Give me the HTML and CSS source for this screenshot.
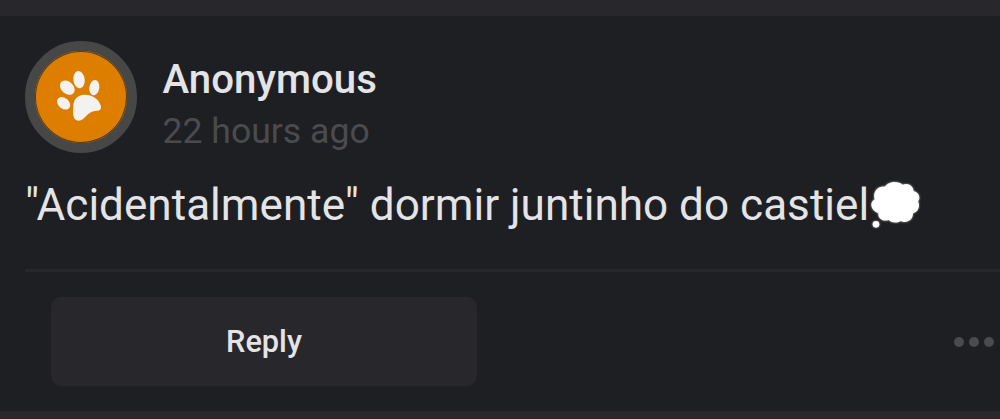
FILE: index.html
```html
<!DOCTYPE html>
<html lang="en">
<head>
  <meta charset="UTF-8">
  <meta name="viewport" content="width=device-width, initial-scale=1.0">
  <title>Question</title>
  <link rel="stylesheet" href="styles.css">
</head>
<body>
  <article class="card">
    <header class="card-header">
      <div class="avatar">
        <svg class="paw" viewBox="132 120 162 162" width="54" height="54">
          <ellipse cx="161" cy="220" rx="16" ry="22" transform="rotate(-50 161 220)"/>
          <ellipse cx="172" cy="173" rx="18" ry="25" transform="rotate(-48 172 173)"/>
          <ellipse cx="207" cy="149" rx="17" ry="26" transform="rotate(-8 207 149)"/>
          <ellipse cx="253" cy="173" rx="15" ry="23" transform="rotate(8 253 173)"/>
          <path d="M223 194C245 193 266 206 272 226C276 240 268 243 256 243C244 244 236 250 226 260C216 272 203 276 195 268C188 260 189 244 190 228C191 207 202 195 223 194Z"/>
        </svg>
      </div>
      <div class="author">
        <div class="name">Anonymous</div>
        <div class="time">22 hours ago</div>
      </div>
    </header>
    <div class="question">
      <span class="question-text">"Acidentalmente" dormir juntinho do castiel</span>
      <svg class="thought" viewBox="56 33 156 144" width="52" height="48">
        <path d="M73 88C66 67 82 47 104 50C113 34 143 31 157 44C174 37 190 49 190 64C205 66 212 83 203 94C211 109 202 127 188 130C188 152 167 161 151 153C140 160 124 159 115 150C98 156 82 145 84 129C64 124 54 99 73 88Z"/>
        <circle cx="77" cy="163" r="10"/>
      </svg>
    </div>
    <footer class="card-footer">
      <button class="reply">Reply</button>
      <div class="more"><span></span><span></span><span></span></div>
    </footer>
  </article>
</body>
</html>
```

FILE: styles.css
```css
body {
  margin: 0;
  overflow: hidden;
  background: #28272c;
  font-family: Roboto, sans-serif;
  color: #e4e4e7;
}

.card {
  box-sizing: border-box;
  height: 395px;
  margin-top: 16px;
  padding: 25px 0 0 25px;
  background: #1e1f23;
}

.card-header {
  display: flex;
  gap: 25.5px;
  height: 112px;
}

.avatar {
  box-sizing: border-box;
  display: flex;
  align-items: center;
  justify-content: center;
  width: 112px;
  height: 112px;
  border: 10px solid #474747;
  border-radius: 50%;
  background: #dd7e00;
  box-shadow: inset 0 0 0 1px #5a3c10;
}

.paw {
  fill: #f4f2ef;
}

.author {
  padding-top: 13px;
}

.name {
  font-size: 40.2px;
  font-weight: 500;
  line-height: 52px;
}

.time {
  color: #4b4b4e;
  font-size: 35.6px;
  line-height: 51px;
}

.question {
  box-sizing: border-box;
  display: flex;
  align-items: center;
  height: 119px;
  padding-bottom: 12px;
  border-bottom: 3px solid #27272b;
  font-size: 44.1px;
  white-space: nowrap;
}

.thought {
  fill: #fff;
  filter: drop-shadow(0 0 1px #aaa);
}

.card-footer {
  display: flex;
  align-items: center;
  justify-content: space-between;
  padding: 25px 6px 0 26px;
}

.reply {
  width: 426px;
  height: 89px;
  border: none;
  border-radius: 10px;
  background: #28272c;
  color: #e4e4e7;
  font: 500 30.7px Roboto, sans-serif;
}

.more {
  display: flex;
  gap: 5px;
}

.more span {
  width: 10px;
  height: 10px;
  border-radius: 50%;
  background: #4b4b4e;
}
```
